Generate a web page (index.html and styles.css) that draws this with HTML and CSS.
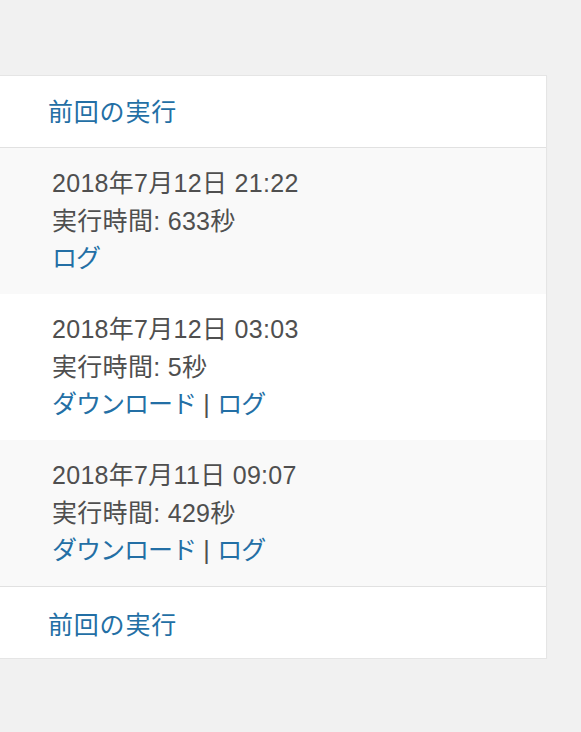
FILE: index.html
```html
<!DOCTYPE html>
<html lang="ja">
<head>
<meta charset="utf-8">
<link rel="stylesheet" href="styles.css">
</head>
<body>
<div class="page">
  <div class="panel">
    <div class="head"><a href="#">前回の実行</a></div>
    <div class="row alt">
      <div class="line">2018年7月12日 21:22</div>
      <div class="line">実行時間: 633秒</div>
      <div class="line"><a href="#">ログ</a></div>
    </div>
    <div class="row">
      <div class="line">2018年7月12日 03:03</div>
      <div class="line">実行時間: 5秒</div>
      <div class="line"><a href="#">ダウンロード</a> | <a href="#">ログ</a></div>
    </div>
    <div class="row alt">
      <div class="line">2018年7月11日 09:07</div>
      <div class="line">実行時間: 429秒</div>
      <div class="line"><a href="#">ダウンロード</a> | <a href="#">ログ</a></div>
    </div>
    <div class="foot"><a href="#">前回の実行</a></div>
  </div>
</div>
</body>
</html>
```
FILE: styles.css
```css
html, body {
  margin: 0;
  padding: 0;
  background: #f1f1f1;
}
body {
  font-family: "Liberation Sans", "Noto Sans CJK JP", sans-serif;
  font-size: 25px;
  color: #4f4f4f;
  overflow: hidden;
}
.page {
  padding-top: 75px;
}
.panel {
  margin-left: -40px;
  width: 585px;
  background: #fff;
  border: 1px solid #e5e5e5;
  box-shadow: 0 1px 1px rgba(0,0,0,0.04);
}
a {
  color: #236fa5;
  text-decoration: none;
}
.head, .foot {
  height: 71px;
  display: flex;
  align-items: center;
  padding-left: 87px;
  line-height: 37px;
  letter-spacing: 0.8px;
  box-sizing: border-box;
}
.head {
  border-bottom: 1px solid #e1e1e1;
  padding-top: 2px;
  height: 72px;
}
.foot {
  border-top: 1px solid #e1e1e1;
  padding-top: 6px;
  height: 72px;
}
.row {
  padding: 17px 0 17px 91px;
  height: 112px;
  line-height: 37.5px;
}
.row.alt {
  background: #f9f9f9;
}
.line {
  letter-spacing: 0.3px;
}
.line a {
  letter-spacing: -1px;
}
```
